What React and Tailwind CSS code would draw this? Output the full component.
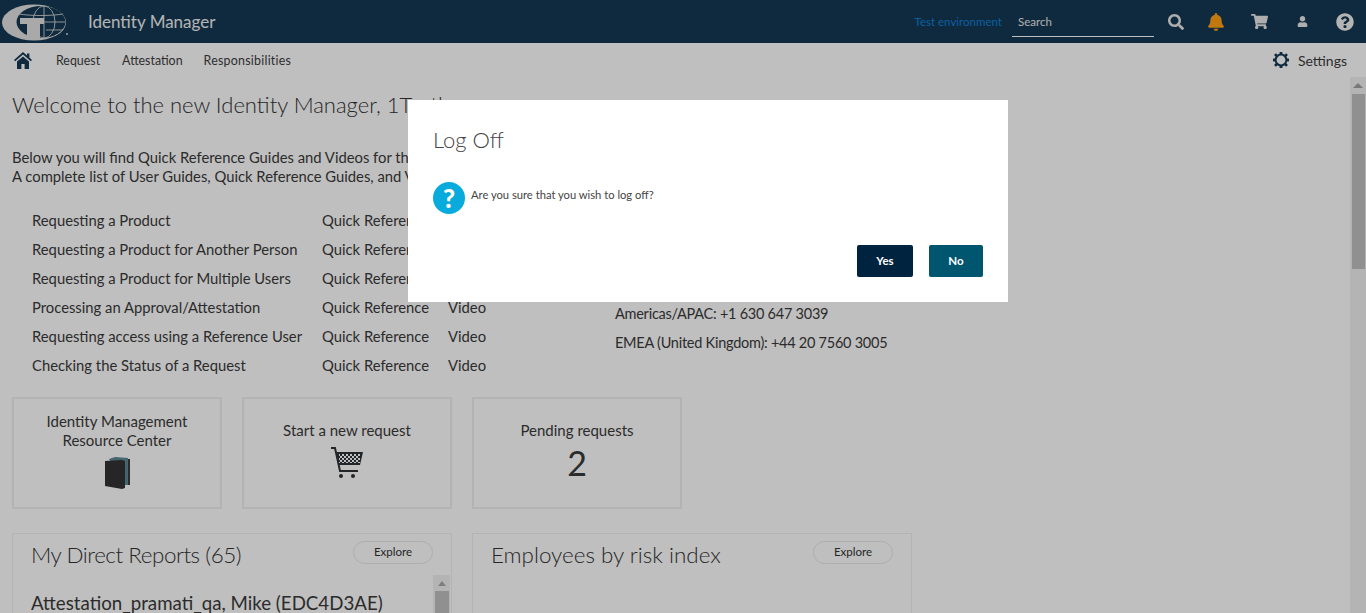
import React from "react";
import { FaSearch, FaBell, FaShoppingCart, FaUser, FaQuestionCircle } from "react-icons/fa";

const guides = [
  "Requesting a Product",
  "Requesting a Product for Another Person",
  "Requesting a Product for Multiple Users",
  "Processing an Approval/Attestation",
  "Requesting access using a Reference User",
  "Checking the Status of a Request",
];

function Logo() {
  return (
    <svg width="68" height="43" viewBox="0 0 68 43">
      <ellipse cx="34" cy="22.5" rx="32" ry="18" fill="#e2e2e2" />
      <ellipse cx="41" cy="22" rx="24.5" ry="16" fill="#143853" />
      <g fill="none" stroke="#d6d6d6" strokeWidth="0.9">
        <ellipse cx="44" cy="22" rx="11" ry="16" />
        <path d="M44 6v32M19 14c12 2 32 2 44 0M46 30c6 0 11 0 17 0M43 22h22" />
      </g>
      <path d="M20 18h24v6h-4v15H27V24h-7z" fill="#e2e2e2" />
      <circle cx="67" cy="34" r="1" fill="#d6d6d6" />
    </svg>
  );
}

function HomeIcon() {
  return (
    <svg width="18" height="17" viewBox="0 0 18 17" fill="#143853">
      <path d="M9 0l4 3.4V1.5h2.4v4L18 8l-1.2 1.2L9 2.6 1.2 9.2 0 8z" />
      <path d="M3 9.6L9 4.5l6 5.1V17h-4.4v-5H7.4v5H3z" />
    </svg>
  );
}

function GearIcon() {
  return (
    <svg width="16" height="16" viewBox="0 0 16 16" fill="none">
      <circle cx="8" cy="8" r="5.4" stroke="#143853" strokeWidth="2" />
      <g fill="#143853">
        <rect x="6.6" y="0" width="2.8" height="2.6" />
        <rect x="6.6" y="13.4" width="2.8" height="2.6" />
        <rect x="0" y="6.6" width="2.6" height="2.8" />
        <rect x="13.4" y="6.6" width="2.6" height="2.8" />
        <rect x="1.6" y="1.8" width="2.6" height="2.6" transform="rotate(45 2.9 3.1)" />
        <rect x="11.8" y="1.8" width="2.6" height="2.6" transform="rotate(45 13.1 3.1)" />
        <rect x="1.6" y="11.6" width="2.6" height="2.6" transform="rotate(45 2.9 12.9)" />
        <rect x="11.8" y="11.6" width="2.6" height="2.6" transform="rotate(45 13.1 12.9)" />
      </g>
    </svg>
  );
}

function BookIcon() {
  return (
    <svg width="27" height="33" viewBox="0 0 27 33">
      <path d="M21 3h5v26h-2z" fill="#3a3a3a" />
      <path d="M5 3l6-2 13 1v27h-3z" fill="#5c8796" />
      <path d="M1 5l17-1 3 1v27l-3 1L1 30z" fill="#333333" />
    </svg>
  );
}

function CartIcon() {
  return (
    <svg width="34" height="34" viewBox="0 0 34 34">
      <defs>
        <pattern id="check" width="4" height="4" patternUnits="userSpaceOnUse">
          <rect width="4" height="4" fill="#2f3336" />
          <rect width="2" height="2" fill="#ffffff" />
          <rect x="2" y="2" width="2" height="2" fill="#ffffff" />
        </pattern>
      </defs>
      <path d="M1 2h4l5 23h18" fill="none" stroke="#2f3336" strokeWidth="2" />
      <path d="M6 6h27l-3 13H9z" fill="#2f3336" />
      <rect x="9" y="8" width="21" height="9" fill="url(#check)" />
      <circle cx="11" cy="30" r="2" fill="#2f3336" />
      <circle cx="23" cy="30" r="2" fill="#2f3336" />
    </svg>
  );
}

function Tile({ children }) {
  return (
    <div className="w-[210px] h-[112px] border-2 border-[#efefef] flex flex-col items-center text-center text-[15px] leading-[19px] text-[#3a3a3a]">
      {children}
    </div>
  );
}

function Card({ title, children }) {
  return (
    <div className="relative w-[440px] h-[120px] border border-[#efefef] px-[18px] pt-[7px]">
      <div className="flex items-start justify-between">
        <h2 className="-mt-[1px] text-[22.4px] leading-[30px] font-light text-[#333333]">{title}</h2>
        <button className="w-[80px] h-[23px] pb-[2px] rounded-full border border-[#e8e8e8] text-[11.5px] text-[#333333]">
          Explore
        </button>
      </div>
      {children}
    </div>
  );
}

export default function App() {
  return (
    <div className="relative h-[613px] overflow-hidden bg-white font-['Lato','Noto_Sans',sans-serif]">
      <header className="h-[43px] bg-[#143853] flex items-center">
        <Logo />
        <span className="ml-[20px] text-[17px] text-[#f0f0f0]">Identity Manager</span>
        <span className="ml-auto text-[11.5px] text-[#0f80d8]">Test environment</span>
        <div className="ml-[10px] w-[142px] h-[28px] mt-[2px] border-b border-white flex items-center pl-[6px] text-[11.5px] text-[#e8e8e8]">
          Search
        </div>
        <div className="flex items-center ml-[14px] mr-[12px]">
          <FaSearch className="text-[#e8e8e8] text-[16px]" />
          <FaBell className="ml-[23px] text-[#ffa216] text-[18px]" />
          <FaShoppingCart className="ml-[26px] text-[#e8e8e8] text-[17px]" />
          <FaUser className="ml-[29px] text-[#e8e8e8] text-[11px]" />
          <FaQuestionCircle className="ml-[28px] text-[#f0f0f0] text-[18px]" />
        </div>
      </header>

      <nav className="h-[34px] flex items-center pl-[14px] pr-[19px] pt-[3px] text-[12.4px] text-[#3c3c3c]">
        <div className="-mt-[2px]"><HomeIcon /></div>
        <span className="ml-[24px]">Request</span>
        <span className="ml-[22px]">Attestation</span>
        <span className="ml-[21px] tracking-[0.25px]">Responsibilities</span>
        <div className="ml-auto -mt-[3px] flex items-center gap-[9px] text-[14px]">
          <GearIcon />
          Settings
        </div>
      </nav>

      <div className="flex h-[536px]">
        <main className="flex-1 overflow-hidden pl-[12px] pt-[13px]">
          <h1 className="text-[22px] leading-[30px] font-light text-[#333333]">Welcome to the new Identity Manager, 1Testh</h1>
          <p className="mt-[28px] text-[14.8px] leading-[19px] text-[#3a3a3a] whitespace-nowrap">
            Below you will find Quick Reference Guides and Videos for the
            <br />
            A complete list of User Guides, Quick Reference Guides, and Videos
          </p>
          <div className="flex">
            <ul className="w-[603px] mt-[20px] pl-[20px] text-[14.8px] text-[#3a3a3a]">
              {guides.map((g) => (
                <li key={g} className="flex h-[29px] items-center whitespace-nowrap">
                  <span className="w-[290px]">{g}</span>
                  <span className="w-[126px]">Quick Reference</span>
                  <span>Video</span>
                </li>
              ))}
            </ul>
            <div className="mt-[113px] text-[14.5px] tracking-[-0.25px] text-[#3a3a3a]">
              <p className="h-[29px] flex items-center">Americas/APAC: +1 630 647 3039</p>
              <p className="h-[29px] flex items-center">EMEA (United Kingdom): +44 20 7560 3005</p>
            </div>
          </div>
          <div className="flex gap-[20px] mt-[17px]">
            <Tile>
              <div className="mt-[13px]">
                Identity Management
                <br />
                Resource Center
              </div>
              <div className="mt-[6px]"><BookIcon /></div>
            </Tile>
            <Tile>
              <div className="mt-[22px]">Start a new request</div>
              <div className="mt-[6px]"><CartIcon /></div>
            </Tile>
            <Tile>
              <div className="mt-[22px]">Pending requests</div>
              <div className="text-[34px] leading-[42px] mt-[2px]">2</div>
            </Tile>
          </div>
          <div className="flex gap-[20px] mt-[24px]">
            <Card title={<span className="tracking-[-0.45px]">My Direct Reports (65)</span>}>
              <div className="mt-[20px] text-[18.7px] leading-[26px] text-[#3a3a3a] whitespace-nowrap">Attestation_pramati_qa, Mike (EDC4D3AE)</div>
              <div className="absolute right-[1px] top-[41px] bottom-0 w-[17px] bg-[#f1f1f1] flex flex-col items-center pt-[6px]">
                <div className="w-0 h-0 border-x-[4px] border-x-transparent border-b-[5px] border-b-[#a8a8a8]" />
                <div className="mt-[5px] w-[14px] flex-1 bg-[#c1c1c1]" />
              </div>
            </Card>
            <Card title="Employees by risk index" />
          </div>
        </main>
        <aside className="w-[16px] bg-[#f1f1f1] flex flex-col items-center pt-[6px]">
          <div className="w-0 h-0 border-x-[5px] border-x-transparent border-b-[5px] border-b-[#a0a0a0]" />
          <div className="mt-[6px] w-[13px] h-[175px] bg-[#c1c1c1]" />
        </aside>
      </div>

      <div className="absolute inset-0 bg-black/25" />

      <div className="absolute left-[408px] top-[100px] w-[600px] h-[202px] bg-white px-[25px] pt-[26px]">
        <h3 className="-mt-[1px] text-[22px] leading-[30px] font-light text-[#444444]">Log Off</h3>
        <div className="mt-[27px] flex items-center gap-[6px] h-[32px]">
          <div className="w-[32px] h-[32px] rounded-full bg-[#08abdc] flex items-center justify-center text-white text-[26px] font-black leading-none">?</div>
          <span className="-mt-[5px] text-[11.2px] text-[#444444]">Are you sure that you wish to log off?</span>
        </div>
        <div className="mt-[31px] flex justify-end gap-[16px]">
          <button className="w-[56px] h-[32px] rounded-[2px] bg-[#00243f] text-white text-[11.5px] font-bold">Yes</button>
          <button className="w-[54px] h-[32px] rounded-[2px] bg-[#00566f] text-white text-[11.5px] font-bold">No</button>
        </div>
      </div>
    </div>
  );
}
